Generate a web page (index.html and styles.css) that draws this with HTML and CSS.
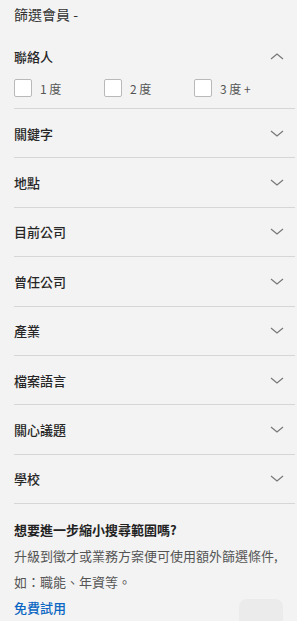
FILE: index.html
```html
<!DOCTYPE html>
<html lang="zh-Hant">
<head>
<meta charset="utf-8">
<link rel="stylesheet" href="styles.css">
</head>
<body>
<div class="panel">
  <div class="title">篩選會員 -</div>
  <div class="section open">
    <div class="head">
      <span class="label">聯絡人</span>
      <svg class="chev" width="14" height="7" viewBox="0 0 14 7"><path d="M1 6 L7 1 L13 6" fill="none" stroke="#777" stroke-width="1.2"/></svg>
    </div>
    <div class="checks">
      <label class="check"><span class="box"></span><span>1 度</span></label>
      <label class="check"><span class="box"></span><span>2 度</span></label>
      <label class="check"><span class="box"></span><span>3 度 +</span></label>
    </div>
  </div>
  <div class="row"><span class="label">關鍵字</span><svg class="chev" width="14" height="7" viewBox="0 0 14 7"><path d="M1 1 L7 6 L13 1" fill="none" stroke="#777" stroke-width="1.2"/></svg></div>
  <div class="row"><span class="label">地點</span><svg class="chev" width="14" height="7" viewBox="0 0 14 7"><path d="M1 1 L7 6 L13 1" fill="none" stroke="#777" stroke-width="1.2"/></svg></div>
  <div class="row"><span class="label">目前公司</span><svg class="chev" width="14" height="7" viewBox="0 0 14 7"><path d="M1 1 L7 6 L13 1" fill="none" stroke="#777" stroke-width="1.2"/></svg></div>
  <div class="row"><span class="label">曾任公司</span><svg class="chev" width="14" height="7" viewBox="0 0 14 7"><path d="M1 1 L7 6 L13 1" fill="none" stroke="#777" stroke-width="1.2"/></svg></div>
  <div class="row"><span class="label">產業</span><svg class="chev" width="14" height="7" viewBox="0 0 14 7"><path d="M1 1 L7 6 L13 1" fill="none" stroke="#777" stroke-width="1.2"/></svg></div>
  <div class="row"><span class="label">檔案語言</span><svg class="chev" width="14" height="7" viewBox="0 0 14 7"><path d="M1 1 L7 6 L13 1" fill="none" stroke="#777" stroke-width="1.2"/></svg></div>
  <div class="row"><span class="label">關心議題</span><svg class="chev" width="14" height="7" viewBox="0 0 14 7"><path d="M1 1 L7 6 L13 1" fill="none" stroke="#777" stroke-width="1.2"/></svg></div>
  <div class="row"><span class="label">學校</span><svg class="chev" width="14" height="7" viewBox="0 0 14 7"><path d="M1 1 L7 6 L13 1" fill="none" stroke="#777" stroke-width="1.2"/></svg></div>
  <div class="upsell">
    <div class="up-title">想要進一步縮小搜尋範圍嗎?</div>
    <p class="up-text">升級到徵才或業務方案便可使用額外篩選條件,<br>如：職能、年資等。</p>
    <a class="up-link">免費試用</a>
  </div>
</div>
<div class="blob"></div>
</body>
</html>
```

FILE: styles.css
```css
html, body {
  margin: 0;
  padding: 0;
  background: #f3f3f3;
}
body {
  font-family: "Noto Sans CJK TC", "Noto Sans", "Liberation Sans", sans-serif;
  color: #2b2b2b;
  width: 297px;
  height: 621px;
  overflow: hidden;
  position: relative;
}
.panel {
  padding: 4px 2px 0 14px;
}
.title {
  font-size: 14px;
  line-height: 20px;
  color: #333;
}
.head {
  height: 40px;
  margin-top: 12px;
  display: flex;
  align-items: center;
  justify-content: space-between;
  padding-right: 11px;
}
.label {
  font-size: 13px;
  font-weight: 500;
  color: #262626;
}
.checks {
  display: flex;
  height: 24px;
  padding-bottom: 8px;
  border-bottom: 1px solid #d6d6d6;
}
.check {
  width: 90px;
  display: flex;
  align-items: center;
  gap: 8px;
  font-size: 12px;
  color: #555;
}
.box {
  width: 16px;
  height: 16px;
  border: 1px solid #b9b9b9;
  border-radius: 2px;
  background: #fff;
  box-sizing: content-box;
}
.row {
  height: 48.4px;
  display: flex;
  align-items: center;
  justify-content: space-between;
  padding-right: 11px;
  border-bottom: 1px solid #d6d6d6;
}
.chev {
  display: block;
}
.upsell {
  padding-top: 16px;
}
.up-title {
  font-size: 13px;
  font-weight: 700;
  line-height: 20px;
  color: #222;
}
.up-text {
  margin: 3px 0 0;
  font-size: 13px;
  line-height: 26px;
  color: #555;
}
.up-link {
  display: block;
  font-size: 13px;
  line-height: 26px;
  font-weight: 500;
  color: #0a66c2;
}
.blob {
  position: absolute;
  right: 14px;
  bottom: 0;
  width: 44px;
  height: 22px;
  border-radius: 8px 8px 0 0;
  background: #ebebeb;
}
```
